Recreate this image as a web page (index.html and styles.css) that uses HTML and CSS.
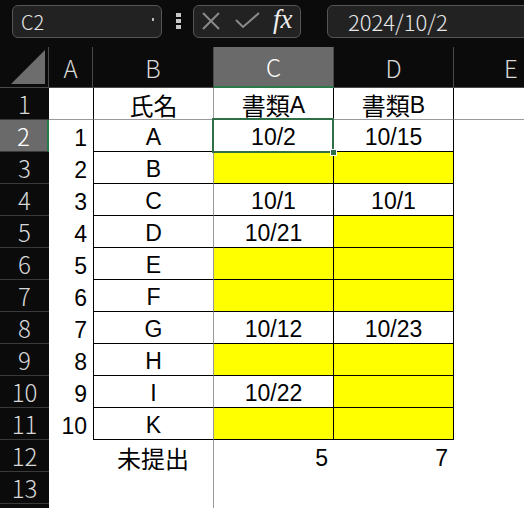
FILE: index.html
```html
<!DOCTYPE html>
<html lang="ja">

<head>
    <meta charset="UTF-8">
    <meta name="viewport" content="width=device-width, initial-scale=1.0">
    <title>提出状況</title>
    <link rel="stylesheet" href="styles.css">
</head>

<body>
    <!-- Name box + formula bar -->
    <div class="formula-bar">
        <div class="name-box">
            <span>C2</span>
            <span class="name-drop"></span>
        </div>
        <div class="grip"><i></i><i></i><i></i></div>
        <div class="fx-buttons">
            <svg class="fx-icon" width="18" height="18" viewBox="0 0 18 18">
                <path d="M1 1 L17 17 M17 1 L1 17" stroke="#8a8a8a" stroke-width="2" fill="none" />
            </svg>
            <svg class="fx-icon" width="26" height="18" viewBox="0 0 26 18">
                <path d="M1 8 L8 15 L24 1" stroke="#8a8a8a" stroke-width="2" fill="none" />
            </svg>
            <span class="fx">fx</span>
        </div>
        <div class="formula-input">2024/10/2</div>
    </div>

    <!-- Sheet grid -->
    <div class="sheet">
        <div class="hd corner"><span class="corner-tri"></span></div>
        <div class="hd">A</div>
        <div class="hd">B</div>
        <div class="hd hd-sel">C</div>
        <div class="hd">D</div>
        <div class="hd hd-last">E</div>

        <div class="rh">1</div>
        <div class="c freeze-row"></div>
        <div class="c freeze-row freeze-col tb tb-left jp">氏名</div>
        <div class="c freeze-row tb jp">書類<span class="lat">A</span></div>
        <div class="c freeze-row tb jp">書類<span class="lat">B</span></div>
        <div class="c freeze-row"></div>

        <div class="rh rh-sel">2</div>
        <div class="c num">1</div>
        <div class="c freeze-col tb tb-left tb-bottom">A</div>
        <div class="c tb tb-bottom active">10/2</div>
        <div class="c tb tb-bottom">10/15</div>
        <div class="c"></div>

        <div class="rh">3</div>
        <div class="c num">2</div>
        <div class="c freeze-col tb tb-left tb-bottom">B</div>
        <div class="c tb tb-bottom blank"></div>
        <div class="c tb tb-bottom blank"></div>
        <div class="c"></div>

        <div class="rh">4</div>
        <div class="c num">3</div>
        <div class="c freeze-col tb tb-left tb-bottom">C</div>
        <div class="c tb tb-bottom">10/1</div>
        <div class="c tb tb-bottom">10/1</div>
        <div class="c"></div>

        <div class="rh">5</div>
        <div class="c num">4</div>
        <div class="c freeze-col tb tb-left tb-bottom">D</div>
        <div class="c tb tb-bottom">10/21</div>
        <div class="c tb tb-bottom blank"></div>
        <div class="c"></div>

        <div class="rh">6</div>
        <div class="c num">5</div>
        <div class="c freeze-col tb tb-left tb-bottom">E</div>
        <div class="c tb tb-bottom blank"></div>
        <div class="c tb tb-bottom blank"></div>
        <div class="c"></div>

        <div class="rh">7</div>
        <div class="c num">6</div>
        <div class="c freeze-col tb tb-left tb-bottom">F</div>
        <div class="c tb tb-bottom blank"></div>
        <div class="c tb tb-bottom blank"></div>
        <div class="c"></div>

        <div class="rh">8</div>
        <div class="c num">7</div>
        <div class="c freeze-col tb tb-left tb-bottom">G</div>
        <div class="c tb tb-bottom">10/12</div>
        <div class="c tb tb-bottom">10/23</div>
        <div class="c"></div>

        <div class="rh">9</div>
        <div class="c num">8</div>
        <div class="c freeze-col tb tb-left tb-bottom">H</div>
        <div class="c tb tb-bottom blank"></div>
        <div class="c tb tb-bottom blank"></div>
        <div class="c"></div>

        <div class="rh">10</div>
        <div class="c num">9</div>
        <div class="c freeze-col tb tb-left tb-bottom">I</div>
        <div class="c tb tb-bottom">10/22</div>
        <div class="c tb tb-bottom blank"></div>
        <div class="c"></div>

        <div class="rh">11</div>
        <div class="c num">10</div>
        <div class="c freeze-col tb tb-left tb-bottom">K</div>
        <div class="c tb tb-bottom blank"></div>
        <div class="c tb tb-bottom blank"></div>
        <div class="c"></div>

        <div class="rh">12</div>
        <div class="c"></div>
        <div class="c freeze-col jp">未提出</div>
        <div class="c num">5</div>
        <div class="c num">7</div>
        <div class="c"></div>

        <div class="rh">13</div>
        <div class="c"></div>
        <div class="c freeze-col"></div>
        <div class="c"></div>
        <div class="c"></div>
        <div class="c"></div>

        <div class="rh">14</div>
        <div class="c"></div>
        <div class="c freeze-col"></div>
        <div class="c"></div>
        <div class="c"></div>
        <div class="c"></div>
    </div>
</body>

</html>
```

FILE: styles.css
```css
/* Global styles */
html,
body {
    margin: 0;
    padding: 0;
    height: 100%;
    overflow: hidden;
}

body {
    background-color: #0b0b0b;
    font-family: "Liberation Sans", Arial, sans-serif;
}

/* Formula bar */
.formula-bar {
    display: flex;
    align-items: center;
    height: 47px;
    padding-left: 12px;
    box-sizing: border-box;
    padding-bottom: 8px;
    padding-top: 3px;
}

.name-box,
.fx-buttons,
.formula-input {
    height: 33px;
    box-sizing: border-box;
    border: 1px solid #555;
    border-radius: 6px;
    background-color: #222;
    display: flex;
    align-items: center;
}

.name-box {
    width: 150px;
    padding: 0 7px 0 8px;
    justify-content: space-between;
    color: #e6e6e6;
    font-family: "Noto Sans CJK JP", sans-serif;
    font-weight: 300;
    font-size: 20px;
}

.name-drop {
    width: 2px;
    height: 3px;
    background-color: #bbb;
    margin-bottom: 3px;
}

.grip {
    display: flex;
    flex-direction: column;
    gap: 2px;
    margin: 0 12px 0 14px;
}

.grip i {
    display: block;
    width: 5px;
    height: 4px;
    background-color: #c8c8c8;
}

.fx-buttons {
    width: 108px;
    padding-left: 8px;
}

.fx-icon {
    margin-right: 15px;
}

.fx {
    font-family: "Liberation Serif", serif;
    font-style: italic;
    font-size: 27px;
    color: #eee;
    margin-top: -3px;
    margin-left: -3px;
}

.formula-input {
    flex: 1;
    margin-left: 26px;
    margin-right: -10px;
    padding-left: 20px;
    color: #e6e6e6;
    font-family: "Noto Sans CJK JP", sans-serif;
    font-weight: 300;
    font-size: 22px;
}

/* Sheet grid */
.sheet {
    display: grid;
    grid-template-columns: 49px 44px 121px 120px 120px 1fr;
    grid-template-rows: 41px;
    grid-auto-rows: 32px;
}

.hd {
    box-sizing: border-box;
    border-right: 1px solid #4a4a4a;
    border-bottom: 1px solid #4a4a4a;
    display: flex;
    justify-content: center;
    align-items: center;
    color: #d8d8d8;
    font-family: "Noto Sans CJK JP", sans-serif;
    font-weight: 300;
    font-size: 24px;
}

.hd-last {
    border-right: none;
    justify-content: flex-start;
    padding-left: 50px;
}

.hd-sel {
    background-color: #6a6a6a;
    color: #fff;
    border-bottom: 2px solid #2b7a4b;
}

.corner {
    position: relative;
}

.corner-tri {
    position: absolute;
    right: 3px;
    bottom: 3px;
    width: 34px;
    height: 34px;
    background-color: #6d6d6d;
    clip-path: polygon(100% 0, 100% 100%, 0 100%);
}

/* Row headers */
.rh {
    box-sizing: border-box;
    border-bottom: 1px solid #3a3a3a;
    display: flex;
    justify-content: center;
    align-items: center;
    color: #d8d8d8;
    font-family: "Noto Sans CJK JP", sans-serif;
    font-weight: 300;
    font-size: 24px;
    line-height: 32px;
}

.rh-sel {
    background-color: #6a6a6a;
    color: #fff;
    border-right: 2px solid #2b7a4b;
}

/* Cells */
.c {
    box-sizing: border-box;
    background-color: #fff;
    color: #000;
    font-size: 23px;
    line-height: 26px;
    display: flex;
    justify-content: center;
    align-items: flex-end;
    padding-bottom: 1px;
    white-space: nowrap;
}

.num {
    justify-content: flex-end;
    padding-right: 6px;
}

.jp {
    font-family: "Noto Sans CJK JP", sans-serif;
    font-size: 24px;
    line-height: 28px;
    padding-bottom: 0;
}

.lat {
    font-family: "Liberation Sans", Arial, sans-serif;
    font-size: 23px;
}

.blank {
    background-color: #ffff00;
}

/* Table borders */
.tb {
    border-right: 1px solid #000;
}

.tb-left {
    border-left: 1px solid #000;
}

.tb-bottom {
    border-bottom: 1px solid #000;
}

/* Freeze panes split lines */
.freeze-row {
    border-bottom: 1px solid #9a9a9a;
}

.freeze-col {
    border-right: 1px solid #9a9a9a;
}

/* Active cell outline + fill handle */
.active {
    position: relative;
}

.active::after {
    content: "";
    position: absolute;
    left: -2px;
    top: -2px;
    right: -1px;
    bottom: -2px;
    border: 2px solid #2e6f47;
}

.active::before {
    content: "";
    position: absolute;
    right: -4px;
    bottom: -5px;
    width: 5px;
    height: 5px;
    background-color: #2e6f47;
    border: 1px solid #fff;
    z-index: 1;
}
```
